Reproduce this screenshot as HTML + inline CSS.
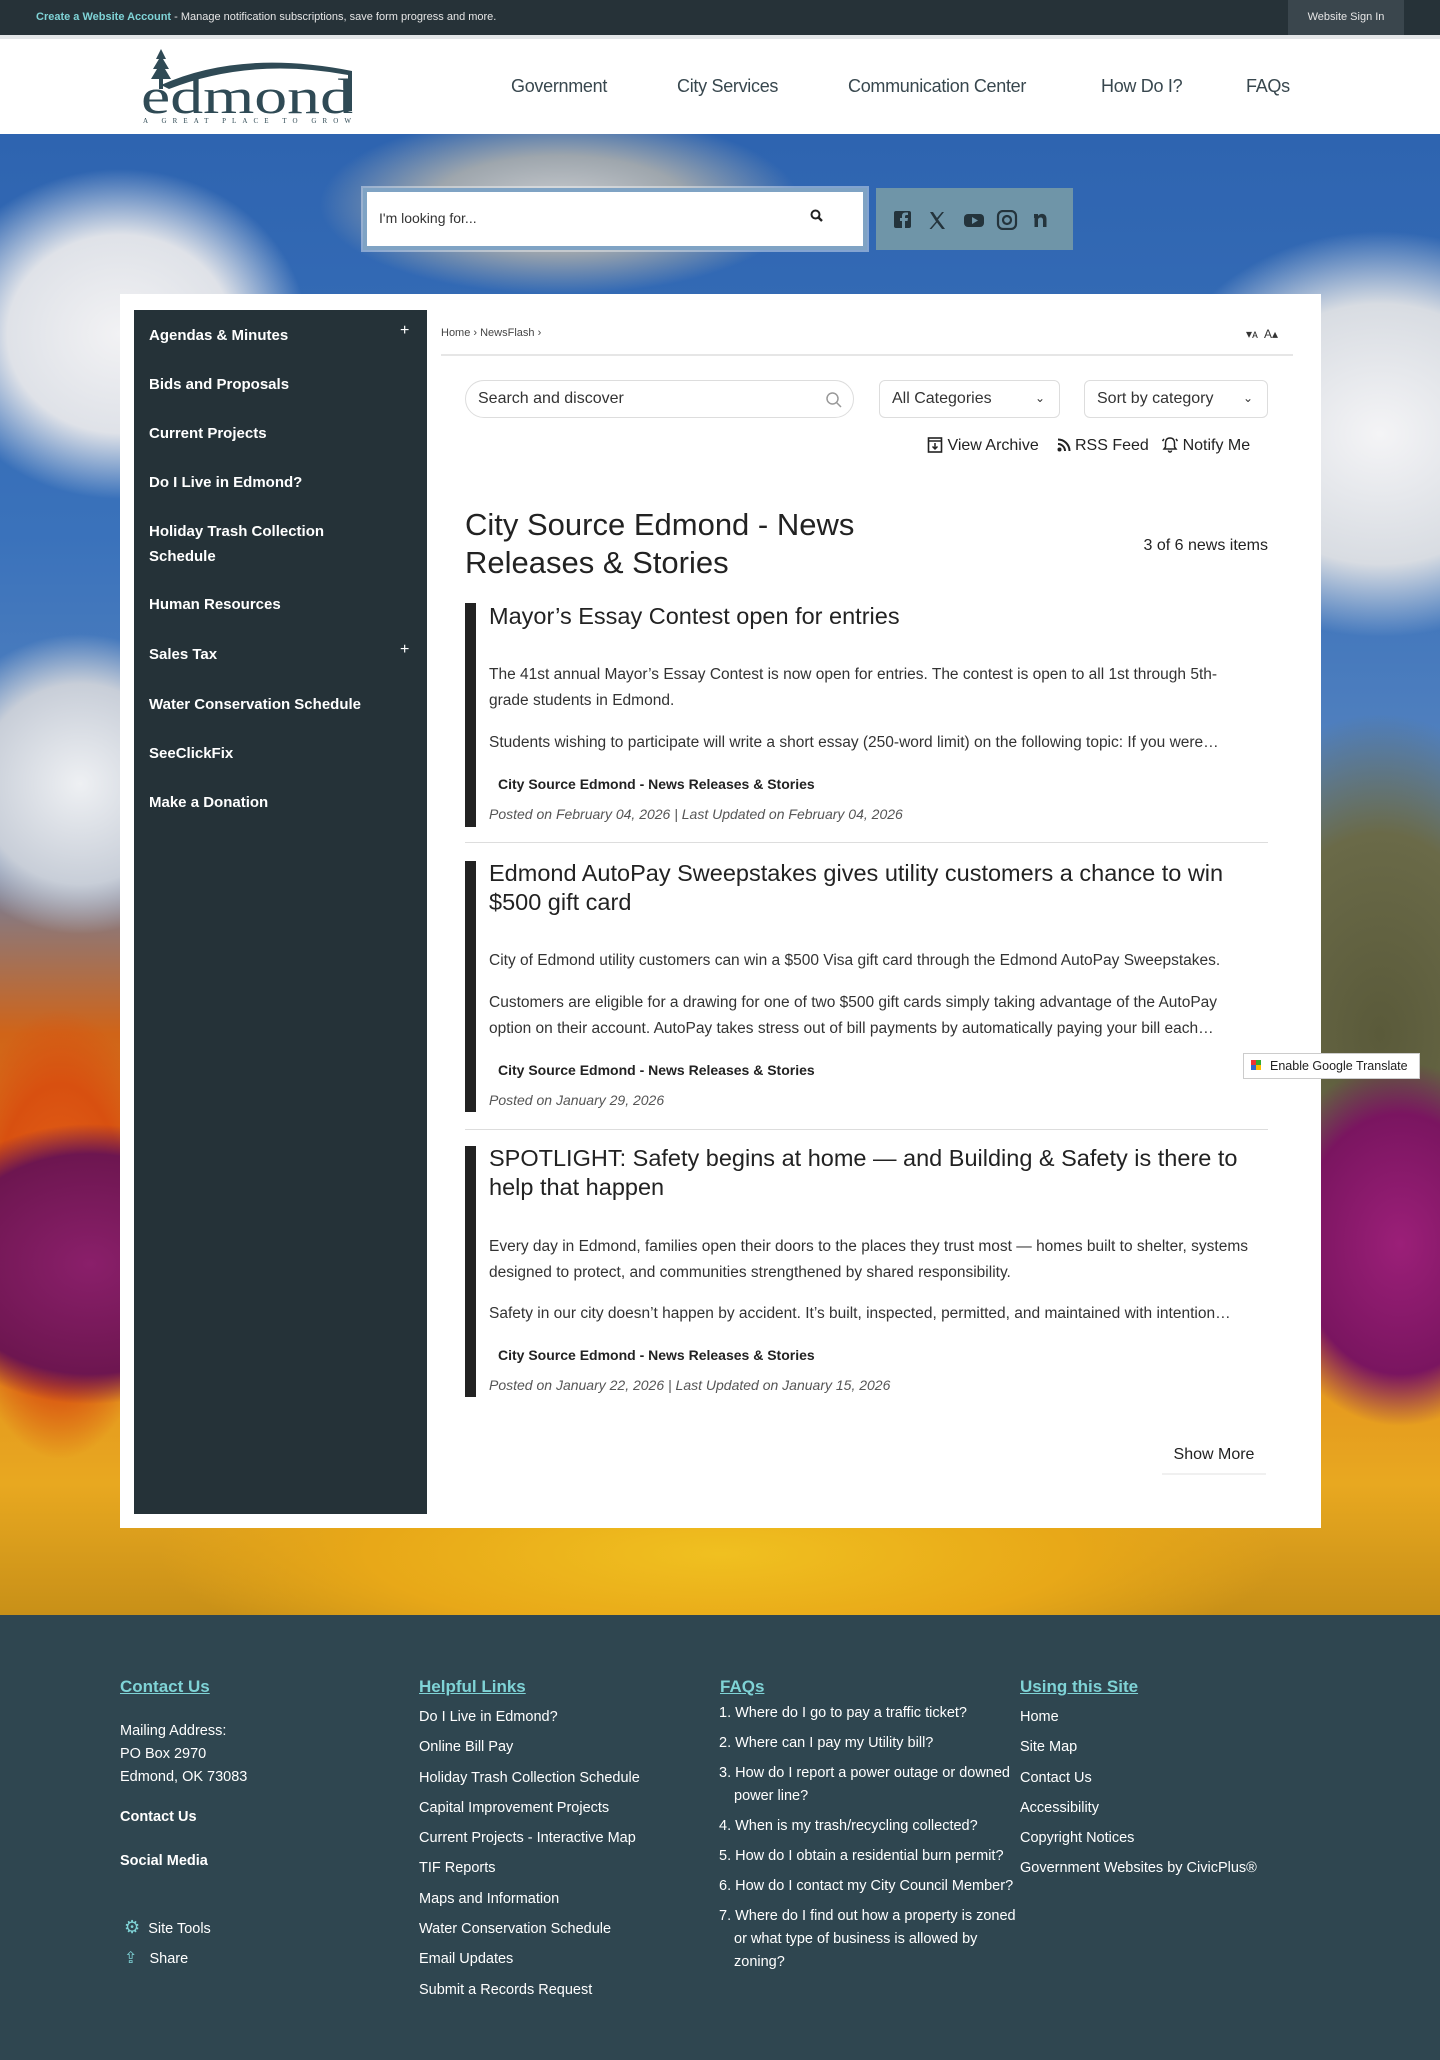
<!DOCTYPE html>
<html><head><meta charset="utf-8">
<style>
*{margin:0;padding:0;box-sizing:border-box}
body{width:1440px;height:2060px;position:relative;font-family:"Liberation Sans",Arial,sans-serif;background:#fff;overflow:hidden}
.a{position:absolute}
#top{left:0;top:0;width:1440px;height:35px;background:#263238;color:#e6e6e6;font-size:11px;line-height:35px}
#hero{left:0;top:134px;width:1440px;height:1481px;
background:
radial-gradient(ellipse 260px 200px at 90px 1130px,#8a1f6a 0,#6d1650 55%,transparent 70%),
radial-gradient(ellipse 200px 260px at 1400px 1110px,#9b1f78 0,#7a1560 50%,transparent 70%),
radial-gradient(ellipse 140px 300px at 60px 1100px,#e8661a 0,#d85010 50%,transparent 75%),
radial-gradient(ellipse 700px 160px at 720px 1420px,#f0c020 0,#e8a818 50%,transparent 80%),
radial-gradient(ellipse 260px 400px at 1380px 900px,#5a5a3a 0,#6a6a48 50%,transparent 80%),
radial-gradient(ellipse 250px 220px at 120px 200px,#f2f2f4 0,#dfe2e8 45%,transparent 75%),
radial-gradient(ellipse 300px 260px at 1380px 300px,#f4f4f6 0,#d8dce2 50%,transparent 78%),
radial-gradient(ellipse 200px 200px at 80px 650px,#eef0f3 0,#c8ced8 50%,transparent 75%),
radial-gradient(ellipse 320px 120px at 560px 70px,#c9ccd0 0,#9ea6ad 40%,transparent 75%),
linear-gradient(180deg,#2e64b0 0,#3a72bb 400px,#5a86c0 700px,#d06418 900px,#e0801c 1100px,#e8a820 1350px,#c89018 1481px)}
#hdr{left:0;top:35px;width:1440px;height:99px;background:#fff;border-top:4px solid #e3e6e8}
.nav{top:76px;font-size:18px;color:#38474e;white-space:nowrap;letter-spacing:-0.3px}
#search{left:363px;top:188px;width:504px;height:62px;background:#fff;border:4px solid #7fa3c4;box-shadow:0 0 0 2px rgba(255,255,255,.4)}
#social{left:876px;top:188px;width:197px;height:62px;background:#6f95a8}
#panel{left:120px;top:294px;width:1201px;height:1234px;background:#fff}
#side{left:134px;top:310px;width:293px;height:1204px;background:#253238}
.si{left:149px;color:#fff;font-weight:bold;font-size:15px;line-height:25px}
.pl{left:400px;color:#fff;font-size:16px}
.bar{left:465px;width:11px;background:#222}
.tt{left:489px;width:780px;font-size:23.5px;color:#222;line-height:29px}
.p{left:489px;width:760px;font-size:15.5px;color:#333;line-height:26px}
.cat{left:498px;font-size:14px;font-weight:bold;color:#222}
.po{left:489px;font-size:14px;font-style:italic;color:#555}
.sep{left:465px;width:803px;height:1px;background:#ddd}
.sel{height:38px;border:1px solid #ddd;border-radius:6px;font-size:16px;color:#333;line-height:36px;padding-left:12px}
#foot{left:0;top:1615px;width:1440px;height:445px;background:#2f4650;color:#fff;font-size:14.5px}
.fh{top:62px;color:#7fd3d6;font-size:17px;font-weight:bold;text-decoration:underline}
</style></head><body>
<div id="top" class="a"><span style="position:absolute;left:36px"><b style="color:#7fd3d6">Create a Website Account</b> - Manage notification subscriptions, save form progress and more.</span>
<span style="position:absolute;left:1288px;width:116px;height:35px;background:#3a464d;text-align:center">Website Sign In</span></div>
<div id="hdr" class="a">
<svg class="a" style="left:141px;top:10px" width="215" height="76" viewBox="0 0 215 76">
<path d="M20 0 l-5 10 h3 l-6 10 h4 l-6 10 h8 v10 h4 v-10 h8 l-6-10 h4 l-6-10 h3z" fill="#2f4a55"/>
<path d="M20 36 Q100 0 211 22 V62 h-4 V26 Q110 8 28 40z" fill="#2f4a55"/>
<text x="0" y="64" font-family="Liberation Serif,serif" font-size="50" fill="#2f4a55" textLength="212" lengthAdjust="spacingAndGlyphs">edmond</text>
<text x="2" y="74" font-family="Liberation Serif,serif" font-size="7" fill="#2f4a55" textLength="208" lengthAdjust="spacing">A GREAT PLACE TO GROW</text>
</svg>
</div>
<div class="a nav" style="left:511px">Government</div>
<div class="a nav" style="left:677px">City Services</div>
<div class="a nav" style="left:848px">Communication Center</div>
<div class="a nav" style="left:1101px">How Do I?</div>
<div class="a nav" style="left:1246px">FAQs</div>
<div id="hero" class="a"></div>
<div id="search" class="a"><span style="position:absolute;left:12px;top:18px;font-size:14px;color:#333">I'm looking for...</span>
<svg style="position:absolute;left:442px;top:16px" width="16" height="16" viewBox="0 0 16 16"><circle cx="6.5" cy="6.5" r="4" stroke="#222" stroke-width="2" fill="none"/><path d="M9.5 9.5 L13 13" stroke="#222" stroke-width="2.4"/></svg></div>
<div id="social" class="a">
<svg style="position:absolute;left:18px;top:22px" width="160" height="20" viewBox="0 0 160 20" fill="#24343c">
<rect x="0" y="1" width="17" height="17" rx="2"/><path d="M11 18 V11 h2.5 l.5-3 h-3 V6.5 c0-1 .4-1.5 1.5-1.5 h1.5 V2.5 h-2.5 c-2.5 0-3.5 1.5-3.5 3.5 V8 H6 v3 h2 v7z" fill="#6f95a8"/>
<path d="M36 2 h3 l4 6 l5-6 h2 l-6 7.5 l7 9.5 h-3 l-5-6.5 l-5.5 6.5 h-2 l6.5-7.5z"/>
<rect x="70" y="4" width="20" height="13" rx="4"/><path d="M78 7 v7 l6-3.5z" fill="#6f95a8"/>
<rect x="104" y="1" width="18" height="18" rx="5" fill="none" stroke="#24343c" stroke-width="2.2"/><circle cx="113" cy="10" r="4" fill="none" stroke="#24343c" stroke-width="2.2"/>
<path d="M140 4 h4 v2 c1-1.5 3-2.5 5-2 c2.5.5 3.5 2.5 3.5 5 v8 h-3.5 v-7 c0-1.5-.8-2.5-2.3-2.5 s-2.7 1-2.7 2.5 v7 h-3.5 V8 h-.5z"/></svg></div>

<div id="panel" class="a"></div>
<div id="side" class="a"></div>
<div class="a si" style="top:323px">Agendas &amp; Minutes</div><div class="a pl" style="top:322px">+</div>
<div class="a si" style="top:372px">Bids and Proposals</div>
<div class="a si" style="top:421px">Current Projects</div>
<div class="a si" style="top:470px">Do I Live in Edmond?</div>
<div class="a si" style="top:519px">Holiday Trash Collection<br>Schedule</div>
<div class="a si" style="top:592px">Human Resources</div>
<div class="a si" style="top:642px">Sales Tax</div><div class="a pl" style="top:641px">+</div>
<div class="a si" style="top:692px">Water Conservation Schedule</div>
<div class="a si" style="top:741px">SeeClickFix</div>
<div class="a si" style="top:790px">Make a Donation</div>

<div class="a" style="left:441px;top:327px;font-size:11px;color:#444">Home › NewsFlash ›</div>
<div class="a" style="left:1246px;top:327px;font-size:12px;color:#333">▾ᴀ&nbsp; A▴</div>
<div class="a" style="left:441px;top:354px;width:852px;height:2px;background:#e6e6e6"></div>
<div class="a sel" style="left:465px;top:380px;width:389px;border-radius:20px">Search and discover
<svg style="position:absolute;right:10px;top:10px" width="18" height="18" viewBox="0 0 18 18"><circle cx="7.5" cy="7.5" r="5.5" stroke="#999" stroke-width="1.5" fill="none"/><path d="M11.5 11.5 L16 16" stroke="#999" stroke-width="1.5"/></svg></div>
<div class="a sel" style="left:879px;top:380px;width:181px">All Categories<span style="position:absolute;right:14px;top:-1px;font-size:12px">⌄</span></div>
<div class="a sel" style="left:1084px;top:380px;width:184px">Sort by category<span style="position:absolute;right:14px;top:-1px;font-size:12px">⌄</span></div>
<div class="a" style="left:927px;top:436px;font-size:16px;color:#222;white-space:nowrap">
<svg width="16" height="17" viewBox="0 0 16 17" style="vertical-align:-3px"><rect x="1.5" y="2" width="13" height="14" fill="none" stroke="#222" stroke-width="1.6"/><path d="M1.5 5h13M8 7v6M5.5 10.5 8 13l2.5-2.5" stroke="#222" stroke-width="1.5" fill="none"/></svg> View Archive
&nbsp;&nbsp;&nbsp;<svg width="14" height="14" viewBox="0 0 14 14" style="vertical-align:-2px"><circle cx="2.5" cy="11.5" r="2" fill="#222"/><path d="M1 6a7 7 0 0 1 7 7M1 1.5a11.5 11.5 0 0 1 11.5 11.5" stroke="#222" stroke-width="2" fill="none"/></svg> RSS Feed
&nbsp;&nbsp;<svg width="16" height="17" viewBox="0 0 16 17" style="vertical-align:-3px"><path d="M8 2c-3 0-4.5 2-4.5 5v4L2 13h12l-1.5-2V7c0-3-1.5-5-4.5-5zM6.5 14.5a1.5 1.5 0 0 0 3 0M2 3 0.5 5M14 3l1.5 2" stroke="#222" stroke-width="1.5" fill="none"/></svg> Notify Me</div>

<div class="a" style="left:465px;top:506px;font-size:31px;color:#222;line-height:38px">City Source Edmond - News<br>Releases &amp; Stories</div>
<div class="a" style="left:1100px;top:537px;width:168px;text-align:right;font-size:16px;color:#222">3 of 6 news items</div>

<div class="a bar" style="top:603px;height:224px"></div>
<div class="a tt" style="top:602px">Mayor’s Essay Contest open for entries</div>
<div class="a p" style="top:662px">The 41st annual Mayor’s Essay Contest is now open for entries. The contest is open to all 1st through 5th-grade students in Edmond.</div>
<div class="a p" style="top:730px;white-space:nowrap">Students wishing to participate will write a short essay (250-word limit) on the following topic: If you were…</div>
<div class="a cat" style="top:776px">City Source Edmond - News Releases &amp; Stories</div>
<div class="a po" style="top:806px">Posted on February 04, 2026 | Last Updated on February 04, 2026</div>
<div class="a sep" style="top:842px"></div>

<div class="a bar" style="top:861px;height:251px"></div>
<div class="a tt" style="top:859px">Edmond AutoPay Sweepstakes gives utility customers a chance to win $500 gift card</div>
<div class="a p" style="top:948px;white-space:nowrap">City of Edmond utility customers can win a $500 Visa gift card through the Edmond AutoPay Sweepstakes.</div>
<div class="a p" style="top:990px">Customers are eligible for a drawing for one of two $500 gift cards simply taking advantage of the AutoPay option on their account. AutoPay takes stress out of bill payments by automatically paying your bill each…</div>
<div class="a cat" style="top:1062px">City Source Edmond - News Releases &amp; Stories</div>
<div class="a po" style="top:1092px">Posted on January 29, 2026</div>
<div class="a sep" style="top:1129px"></div>

<div class="a bar" style="top:1146px;height:251px"></div>
<div class="a tt" style="top:1144px">SPOTLIGHT: Safety begins at home — and Building &amp; Safety is there to help that happen</div>
<div class="a p" style="top:1234px">Every day in Edmond, families open their doors to the places they trust most — homes built to shelter, systems designed to protect, and communities strengthened by shared responsibility.</div>
<div class="a p" style="top:1301px;white-space:nowrap">Safety in our city doesn’t happen by accident. It’s built, inspected, permitted, and maintained with intention…</div>
<div class="a cat" style="top:1347px">City Source Edmond - News Releases &amp; Stories</div>
<div class="a po" style="top:1377px">Posted on January 22, 2026 | Last Updated on January 15, 2026</div>

<div class="a" style="left:1162px;top:1435px;width:104px;height:40px;font-size:16px;color:#222;text-align:center;line-height:40px;border-bottom:2px solid #f0f0f0">Show More</div>

<div class="a" style="left:1243px;top:1053px;width:177px;height:26px;background:#fff;border:1px solid #ccc;font-size:12.5px;line-height:24px;padding-left:26px;color:#222">
<span style="position:absolute;left:7px;top:6px;width:5px;height:5px;background:#e33"></span><span style="position:absolute;left:12px;top:6px;width:5px;height:5px;background:#3a3"></span><span style="position:absolute;left:7px;top:11px;width:5px;height:5px;background:#36c"></span><span style="position:absolute;left:12px;top:11px;width:5px;height:5px;background:#fb0"></span>Enable Google Translate</div>

<div id="foot" class="a">
<div class="a fh" style="left:120px">Contact Us</div>
<div class="a fh" style="left:419px">Helpful Links</div>
<div class="a fh" style="left:720px">FAQs</div>
<div class="a fh" style="left:1020px">Using this Site</div>
<div class="a" style="left:120px;top:105px;line-height:23px">Mailing Address:<br>PO Box 2970<br>Edmond, OK 73083</div>
<div class="a" style="left:120px;top:194px;font-weight:bold">Contact Us</div>
<div class="a" style="left:120px;top:238px;font-weight:bold">Social Media</div>
<div class="a" style="left:124px;top:298px;line-height:29px"><span style="color:#7fd3d6;font-size:18px">⚙</span>&nbsp;&nbsp;Site Tools<br><span style="color:#7fd3d6;font-size:16px">⇪</span>&nbsp;&nbsp;&nbsp;Share</div>
<div class="a" style="left:419px;top:87px;line-height:30.3px">Do I Live in Edmond?<br>Online Bill Pay<br>Holiday Trash Collection Schedule<br>Capital Improvement Projects<br>Current Projects - Interactive Map<br>TIF Reports<br>Maps and Information<br>Water Conservation Schedule<br>Email Updates<br>Submit a Records Request</div>
<div class="a" style="left:719px;top:87px;width:300px;line-height:23px">
<div style="margin-bottom:7px">1. Where do I go to pay a traffic ticket?</div>
<div style="margin-bottom:7px">2. Where can I pay my Utility bill?</div>
<div style="margin-bottom:7px;padding-left:15px;text-indent:-15px">3. How do I report a power outage or downed power line?</div>
<div style="margin-bottom:7px">4. When is my trash/recycling collected?</div>
<div style="margin-bottom:7px">5. How do I obtain a residential burn permit?</div>
<div style="margin-bottom:7px">6. How do I contact my City Council Member?</div>
<div style="padding-left:15px;text-indent:-15px">7. Where do I find out how a property is zoned or what type of business is allowed by zoning?</div></div>
<div class="a" style="left:1020px;top:87px;line-height:30.3px">Home<br>Site Map<br>Contact Us<br>Accessibility<br>Copyright Notices<br>Government Websites by CivicPlus®</div>
</div>
</body></html>
